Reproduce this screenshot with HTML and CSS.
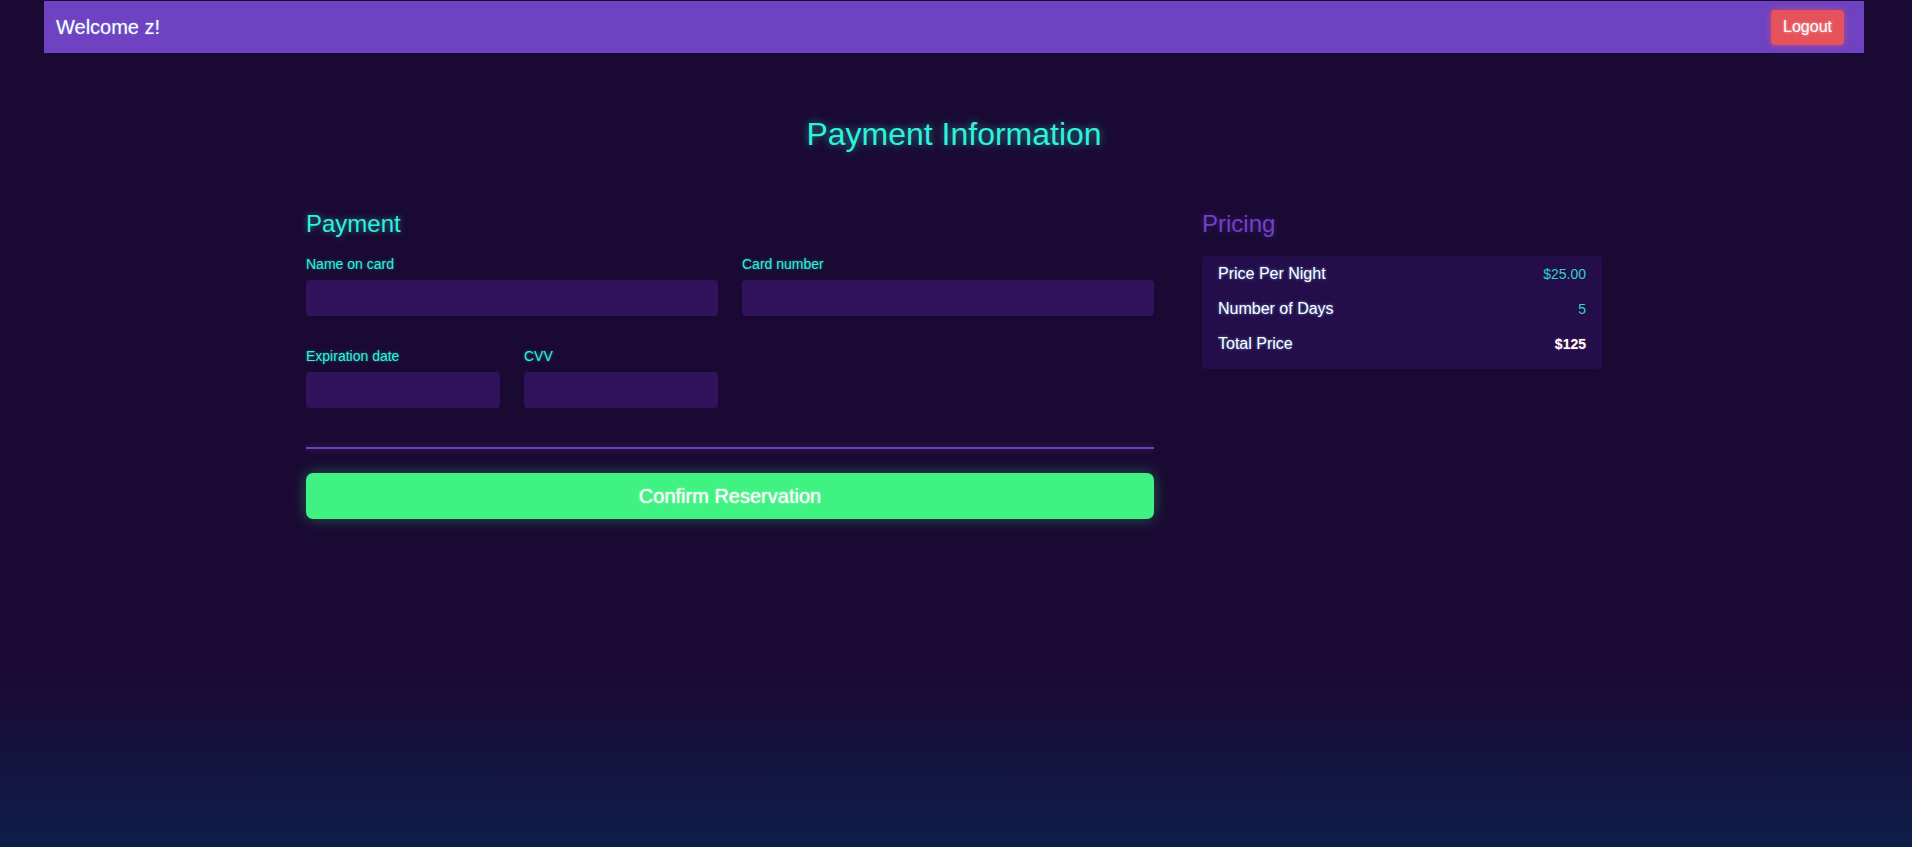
FILE: index.html
```html
<!DOCTYPE html>
<html lang="en">
<head>
<meta charset="utf-8">
<title>Payment Information</title>
<link rel="stylesheet" href="styles.css">
</head>
<body>
<div class="page">
  <nav class="navbar">
    <span class="welcome">Welcome z!</span>
    <button class="logout" type="button">Logout</button>
  </nav>
  <main class="main">
    <h2 class="title">Payment Information</h2>
    <div class="layout">
      <section class="payment">
        <h4 class="section-title">Payment</h4>
        <div class="fields">
          <div class="field span-2">
            <label class="label">Name on card</label>
            <input class="input" type="text">
          </div>
          <div class="field span-2">
            <label class="label">Card number</label>
            <input class="input" type="text">
          </div>
          <div class="field">
            <label class="label">Expiration date</label>
            <input class="input" type="text">
          </div>
          <div class="field">
            <label class="label">CVV</label>
            <input class="input" type="text">
          </div>
        </div>
        <hr class="divider">
        <button class="confirm" type="button">Confirm Reservation</button>
      </section>
      <aside class="pricing">
        <h4 class="section-title pricing-title">Pricing</h4>
        <ul class="price-list">
          <li class="price-row"><span class="price-label">Price Per Night</span><span class="price-value">$25.00</span></li>
          <li class="price-row"><span class="price-label">Number of Days</span><span class="price-value">5</span></li>
          <li class="price-row"><span class="price-label">Total Price</span><span class="price-total">$125</span></li>
        </ul>
      </aside>
    </div>
  </main>
</div>
</body>
</html>
```

FILE: styles.css
```css
html, body {
  margin: 0;
  padding: 0;
}
body {
  min-height: 100vh;
  font-family: "Liberation Sans", Arial, sans-serif;
  color: #ffffff;
  background: linear-gradient(to bottom, #1a0a33 0%, #1a0a33 80%, #0e1e4b 100%);
}
.page {
  min-height: 100vh;
  padding-top: 1px;
  box-sizing: border-box;
}
.navbar {
  margin: 0 48px 0 44px;
  height: 52px;
  background: #6f42c1;
  display: flex;
  align-items: center;
  justify-content: space-between;
  padding: 0 20px 0 12px;
}
.welcome {
  font-size: 20px;
  color: #ffffff;
  text-shadow: 0 0 2px rgba(120, 200, 255, 0.6);
}
.logout {
  width: 73px;
  height: 35px;
  border: none;
  border-radius: 4px;
  background: #e5525b;
  color: #ffffff;
  font-family: "Liberation Sans", Arial, sans-serif;
  font-size: 16px;
  box-shadow: 0 0 6px rgba(240, 90, 100, 0.6);
  text-shadow: 0 0 3px rgba(255, 255, 255, 0.6);
  padding: 0;
}
.main {
  padding-right: 4px;
}
.title {
  margin: 62px 0 0;
  text-align: center;
  font-size: 32px;
  font-weight: 400;
  line-height: 1.2;
  color: #2ef2da;
  text-shadow: 0 0 8px rgba(46, 242, 218, 0.55);
}
.layout {
  width: 1296px;
  margin: 57px auto 0;
  display: grid;
  grid-template-columns: 848px 400px;
  column-gap: 48px;
  align-items: start;
}
.section-title {
  margin: 0;
  font-size: 24px;
  font-weight: 400;
  line-height: 1.2;
  color: #2ef2da;
  text-shadow: 0 0 6px rgba(46, 242, 218, 0.5);
}
.pricing-title {
  color: #7340c9;
  text-shadow: 0 0 6px rgba(115, 64, 201, 0.4);
}
.fields {
  margin-top: 15px;
  display: grid;
  grid-template-columns: repeat(4, minmax(0, 1fr));
  column-gap: 24px;
  row-gap: 30px;
}
.field {
  display: flex;
  flex-direction: column;
  min-width: 0;
}
.span-2 {
  grid-column: span 2;
}
.label {
  font-size: 14px;
  line-height: 21px;
  margin-bottom: 5px;
  color: #2ef2da;
  text-shadow: 0 0 3px rgba(46, 242, 218, 0.45);
}
.input {
  width: 100%;
  min-width: 0;
  height: 36px;
  box-sizing: border-box;
  border: none;
  border-radius: 4px;
  background: #31125c;
  outline: none;
  margin: 0;
  padding: 0 12px;
  color: #ffffff;
}
.divider {
  margin: 39px 0 0;
  border: none;
  height: 2px;
  background: #6a3fc0;
  box-shadow: 0 0 6px rgba(111, 66, 193, 0.5);
}
.confirm {
  display: block;
  width: 100%;
  height: 46px;
  margin-top: 24px;
  border: none;
  border-radius: 7px;
  background: #3ff282;
  color: #ffffff;
  font-family: "Liberation Sans", Arial, sans-serif;
  font-size: 20px;
  box-shadow: 0 0 14px rgba(63, 242, 130, 0.35);
  text-shadow: 0 0 2px rgba(255, 255, 255, 0.8);
}
.price-list {
  list-style: none;
  margin: 17px 0 0;
  padding: 0 16px 8px;
  background: #240d4b;
  border-radius: 3px;
}
.price-row {
  height: 35px;
  display: flex;
  align-items: center;
  justify-content: space-between;
}
.price-label {
  font-size: 16px;
  color: #ffffff;
  text-shadow: 0 0 3px rgba(120, 200, 255, 0.7);
}
.price-value {
  font-size: 14px;
  color: #2fd4c0;
}
.price-total {
  font-size: 14px;
  font-weight: 700;
  color: #ffffff;
  text-shadow: 0 0 2px rgba(255, 120, 160, 0.5);
}
```
